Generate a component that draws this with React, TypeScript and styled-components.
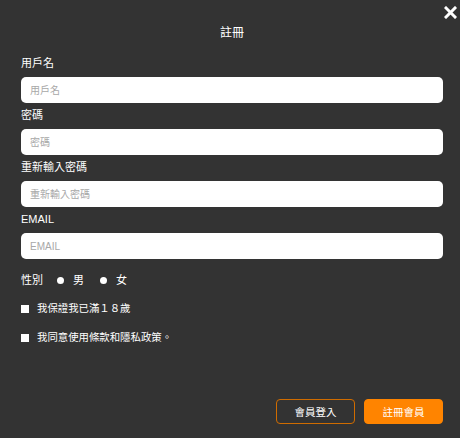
import React from "react";
import styled, { createGlobalStyle } from "styled-components";

const Global = createGlobalStyle`
  html, body { margin: 0; padding: 0; background: #333333; }
  body { font-family: "Liberation Sans", "Noto Sans CJK TC", sans-serif; color: #ffffff; }
  * { box-sizing: border-box; }
`;

const Modal = styled.div`
  position: relative;
  width: 460px;
  height: 438px;
  background: #333333;
  padding: 25px 17px 0 21px;
  display: flex;
  flex-direction: column;
`;

const Close = styled.button`
  position: absolute;
  top: 6px;
  right: 3px;
  width: 13px;
  height: 13px;
  padding: 0;
  border: 0;
  background: transparent;
  cursor: pointer;
  display: flex;
`;

const Title = styled.h1`
  margin: 0 0 10px;
  font-size: 12px;
  line-height: 16px;
  font-weight: normal;
  text-align: center;
`;

const Field = styled.div`
  display: flex;
  flex-direction: column;
`;

const Label = styled.label`
  margin: 5px 0 7px;
  font-size: 11px;
  line-height: 14px;
`;

const Input = styled.input`
  height: 26px;
  width: 100%;
  border: 0;
  border-radius: 5px;
  background: #ffffff;
  padding: 0 9px;
  font-family: "Liberation Sans", "Noto Sans CJK TC", sans-serif;
  font-size: 10px;
  color: #333;
  outline: none;
  &::placeholder { color: #a8a8a8; }
`;

const GenderRow = styled.div`
  margin-top: 14px;
  display: flex;
  align-items: center;
  font-size: 11px;
  line-height: 14px;
`;

const GenderLabel = styled.span`
  margin-right: 14px;
`;

const RadioOption = styled.label`
  display: flex;
  align-items: center;
  gap: 9px;
  margin-right: 16px;
`;

const Dot = styled.span`
  width: 7px;
  height: 7px;
  border-radius: 50%;
  background: #ffffff;
`;

const CheckRow = styled.label`
  margin-top: 15px;
  display: flex;
  align-items: center;
  gap: 8px;
  font-size: 10.4px;
  line-height: 14px;
`;

const Box = styled.span`
  width: 8px;
  height: 8px;
  background: #ffffff;
`;

const Actions = styled.div`
  margin-top: 54px;
  display: flex;
  justify-content: flex-end;
  gap: 9px;
`;

const Button = styled.button<{ $primary?: boolean }>`
  width: 79px;
  height: 25px;
  border-radius: 4px;
  border: 1px solid ${(p) => (p.$primary ? "#ff8400" : "#d06c00")};
  background: ${(p) => (p.$primary ? "#ff8400" : "transparent")};
  color: #ffffff;
  font-family: "Liberation Sans", "Noto Sans CJK TC", sans-serif;
  font-size: 10.5px;
  padding: 0;
  cursor: pointer;
`;

const fields = [
  { label: "用戶名", ph: "用戶名", type: "text" },
  { label: "密碼", ph: "密碼", type: "password" },
  { label: "重新輸入密碼", ph: "重新輸入密碼", type: "password" },
  { label: "EMAIL", ph: "EMAIL", type: "email" },
];

export default function App() {
  return (
    <>
      <Global />
      <Modal>
        <Close aria-label="close">
          <svg width="13" height="13" viewBox="0 0 13 13">
            <path d="M2 2 L11 11 M11 2 L2 11" stroke="#fff" strokeWidth="3" strokeLinecap="square" />
          </svg>
        </Close>
        <Title>註冊</Title>
        {fields.map((f) => (
          <Field key={f.label}>
            <Label>{f.label}</Label>
            <Input type={f.type} placeholder={f.ph} />
          </Field>
        ))}
        <GenderRow>
          <GenderLabel>性別</GenderLabel>
          <RadioOption><Dot />男</RadioOption>
          <RadioOption><Dot />女</RadioOption>
        </GenderRow>
        <CheckRow><Box />我保證我已滿１８歲</CheckRow>
        <CheckRow><Box />我同意使用條款和隱私政策。</CheckRow>
        <Actions>
          <Button>會員登入</Button>
          <Button $primary>註冊會員</Button>
        </Actions>
      </Modal>
    </>
  );
}
